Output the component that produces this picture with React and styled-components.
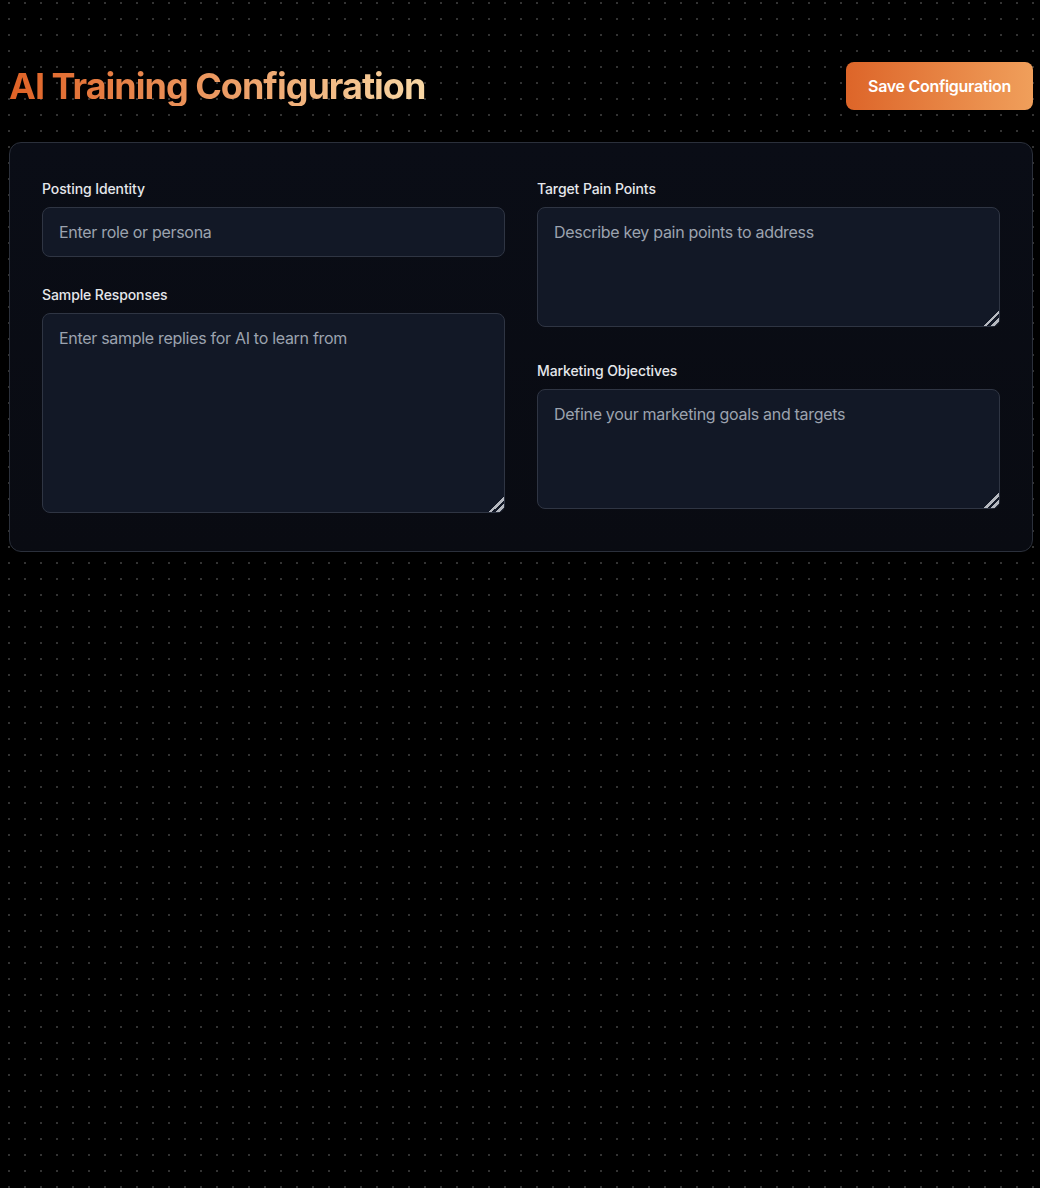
import styled, { createGlobalStyle } from 'styled-components'

const GlobalStyle = createGlobalStyle`
  * {
    box-sizing: border-box;
  }

  html, body {
    margin: 0;
    min-height: 100%;
    background-color: #000;
  }

  body {
    font-family: Inter, 'Noto Sans', 'Liberation Sans', sans-serif;
    color: #e5e7eb;
  }
`

const Page = styled.div`
  min-height: 1188px;
  padding: 62px 7px 32px 9px;
  background-color: #000;
  background-image: radial-gradient(circle at center, rgba(255, 255, 255, 0.2) 0.8px, transparent 1.2px);
  background-size: 16px 16px;
  background-position: 1px -5px;
`

const Container = styled.div`
  max-width: 1024px;
  margin: 0 auto;
`

const Header = styled.header`
  display: flex;
  align-items: center;
  justify-content: space-between;
  margin-bottom: 32px;
`

const Title = styled.h1`
  margin: 0;
  font-size: 36px;
  line-height: 40px;
  font-weight: 700;
  letter-spacing: -1px;
  background: linear-gradient(90deg, #df6226 0%, #ec9a62 50%, #f8d7a4 100%);
  -webkit-background-clip: text;
  background-clip: text;
  color: transparent;
`

const SaveButton = styled.button`
  height: 48px;
  padding: 0 22px;
  border: 0;
  border-radius: 8px;
  font-family: inherit;
  font-size: 16px;
  font-weight: 600;
  letter-spacing: -0.3px;
  color: #fff;
  background: linear-gradient(90deg, #dd6529 0%, #f09f5b 100%);
  cursor: pointer;
`

const Panel = styled.section`
  display: grid;
  grid-template-columns: 1fr 1fr;
  gap: 32px;
  align-items: start;
  padding: 36px 32px 32px;
  border: 1px solid #2b303b;
  border-radius: 12px;
  background: linear-gradient(180deg, #0a0d16 0%, #090b12 100%);
`

const Column = styled.div`
  display: flex;
  flex-direction: column;
  gap: 28px;
`

const Field = styled.div`
  display: flex;
  flex-direction: column;
`

const Label = styled.label`
  margin-bottom: 8px;
  font-size: 14px;
  line-height: 20px;
  font-weight: 500;
  letter-spacing: -0.1px;
  color: #e5e7eb;
`

const fieldStyles = `
  display: block;
  width: 100%;
  padding: 12px 16px;
  border: 1px solid #2f3543;
  border-radius: 8px;
  background-color: #121826;
  font-family: inherit;
  font-size: 16px;
  line-height: 24px;
  letter-spacing: -0.3px;
  color: #e5e7eb;
  outline: none;

  &::placeholder {
    color: #9ca3af;
  }
`

const TextInput = styled.input`
  ${fieldStyles}
`

const TextArea = styled.textarea`
  ${fieldStyles}
  height: ${props => props.$height}px;
  margin-bottom: 6px;
  resize: vertical;

  &::-webkit-resizer {
    background: linear-gradient(
      135deg,
      transparent 0 48%,
      #b5b8bf 48% 60%,
      transparent 60% 72%,
      #b5b8bf 72% 84%,
      transparent 84%
    );
  }
`

function App() {
  return (
    <>
      <GlobalStyle />
      <Page>
        <Container>
          <Header>
            <Title>AI Training Configuration</Title>
            <SaveButton>Save Configuration</SaveButton>
          </Header>
          <Panel>
            <Column>
              <Field>
                <Label>Posting Identity</Label>
                <TextInput placeholder="Enter role or persona" />
              </Field>
              <Field>
                <Label>Sample Responses</Label>
                <TextArea $height={200} placeholder="Enter sample replies for AI to learn from" />
              </Field>
            </Column>
            <Column>
              <Field>
                <Label>Target Pain Points</Label>
                <TextArea $height={120} placeholder="Describe key pain points to address" />
              </Field>
              <Field>
                <Label>Marketing Objectives</Label>
                <TextArea $height={120} placeholder="Define your marketing goals and targets" />
              </Field>
            </Column>
          </Panel>
        </Container>
      </Page>
    </>
  )
}

export default App
